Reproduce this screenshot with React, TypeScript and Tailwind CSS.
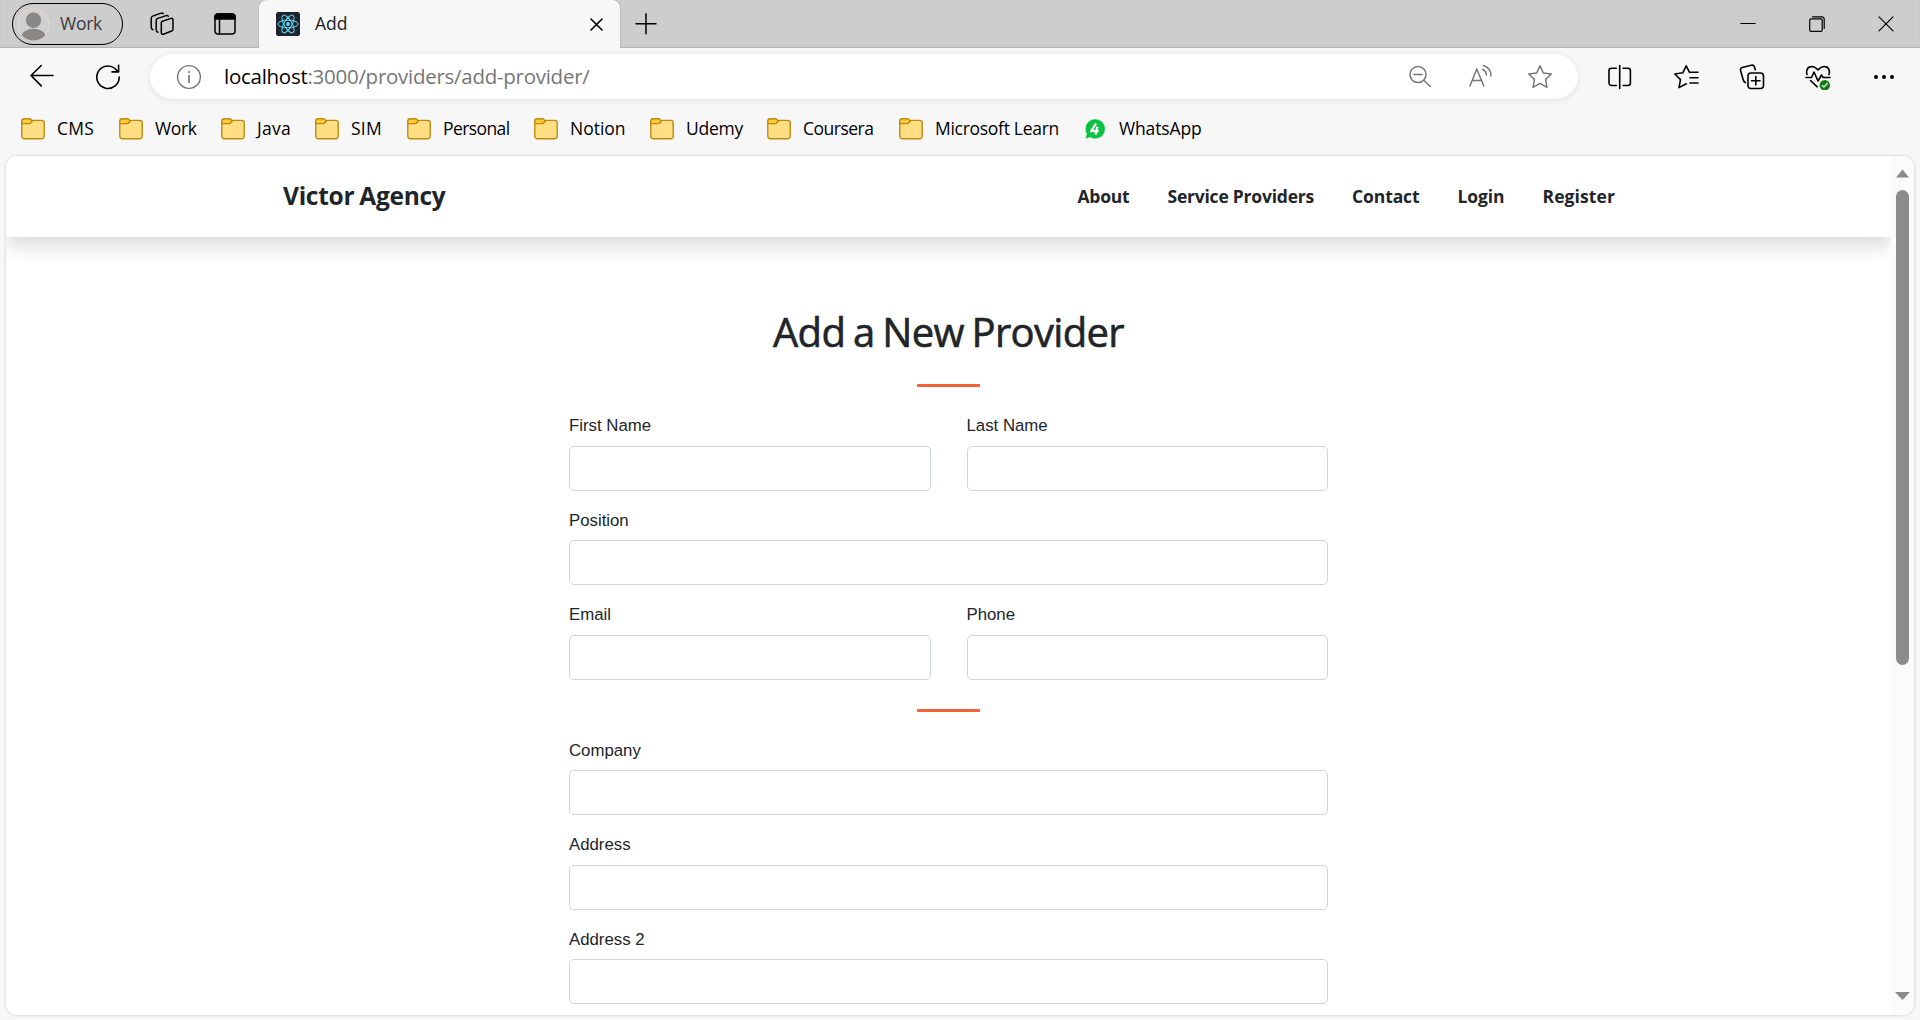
import { useLayoutEffect, useRef, type ReactNode } from "react";

/** Single-line text whose tracking is adjusted so that it fills `width` pixels. */
function FitText({ width, className = "", children }: { width: number; className?: string; children: ReactNode }) {
  const ref = useRef<HTMLSpanElement>(null);
  useLayoutEffect(() => {
    const el = ref.current;
    if (!el) return;
    el.style.letterSpacing = "0px";
    const natural = el.getBoundingClientRect().width;
    const count = (el.textContent ?? "").length;
    el.style.letterSpacing = `${(width - natural) / count}px`;
  }, [width]);
  return (
    <span ref={ref} className={`inline-block shrink-0 whitespace-nowrap ${className}`}>
      {children}
    </span>
  );
}

const line = { fill: "none", stroke: "currentColor", strokeLinecap: "round", strokeLinejoin: "round" } as const;

function WorkspacesIcon() {
  return (
    <svg width="26" height="26" viewBox="0 0 26 26" {...line} strokeWidth="1.5">
      <path d="M13.4 10.2 22.2 7.4a1.4 1.4 0 0 1 1.8 1.3v9.6a1.8 1.8 0 0 1-1.3 1.7l-8.3 3.2a1.5 1.5 0 0 1-2.1-1.4V11.8a1.7 1.7 0 0 1 1.1-1.6Z" />
      <path d="M8.9 21.3C7.8 20.9 7.2 20.1 7.2 18.8V9.6c0-1.1.5-1.8 1.5-2.2l8.5-2.8c1-.3 1.7 0 2 .7" />
      <path d="M3.9 18.7C2.8 18.2 2.2 17.4 2.2 16.2V7.4c0-1.2.5-1.9 1.5-2.3L12 2.1c1-.4 1.8-.1 2.2.6" />
    </svg>
  );
}

function TabActionsIcon() {
  return (
    <svg width="22" height="22" viewBox="0 0 22 22" {...line} strokeWidth="1.5">
      <rect x="1" y="1" width="20" height="20" rx="3" />
      <path d="M1 6V3.5A2.5 2.5 0 0 1 3.5 1h15A2.5 2.5 0 0 1 21 3.5V6Z" fill="currentColor" />
      <path d="M5.5 6v15" />
    </svg>
  );
}

function ReactLogo() {
  return (
    <svg width="24" height="24" viewBox="0 0 24 24">
      <rect width="24" height="24" rx="2.5" fill="#20232a" />
      <g fill="none" stroke="#61dafb" strokeWidth="1">
        <ellipse cx="12" cy="12" rx="10" ry="3.9" />
        <ellipse cx="12" cy="12" rx="10" ry="3.9" transform="rotate(60 12 12)" />
        <ellipse cx="12" cy="12" rx="10" ry="3.9" transform="rotate(120 12 12)" />
      </g>
      <circle cx="12" cy="12" r="1.9" fill="#61dafb" />
    </svg>
  );
}

function FolderIcon() {
  return (
    <svg className="shrink-0" width="24" height="22" viewBox="0 0 24 22" stroke="#bd8b0c" strokeWidth="1.4" strokeLinejoin="round">
      <path d="M.8 4h9.4l1.6-1.6h9A2.4 2.4 0 0 1 23.2 4.8v13.4a2.6 2.6 0 0 1-2.6 2.6H3.4A2.6 2.6 0 0 1 .8 18.2Z" fill="#ffde84" />
      <path d="M.8 5.6V3.2A2.4 2.4 0 0 1 3.2.8h5.1c1 0 1.4.4 2 1.1l.8 1-1 1.5c-.6.9-1.1 1.2-2 1.2Z" fill="#fdcb37" />
    </svg>
  );
}

function WhatsAppIcon() {
  return (
    <svg className="shrink-0" width="24" height="24" viewBox="0 0 24 24">
      <path
        d="M12.3 1.9a10 10 0 1 1-5 18.7L2.2 22l1.3-5.2A10 10 0 0 1 12.3 1.9Z"
        fill="#0cc143"
        stroke="#ffffff"
        strokeWidth=".6"
      />
      <path d="M13 6.5 8.2 14.2h7.5M14.3 9.7l-1.7 7.9" fill="none" stroke="#fff" strokeWidth="2.3" strokeLinejoin="round" />
    </svg>
  );
}

const bookmarks = [
  { name: "CMS", box: "w-[98px]", width: 37 },
  { name: "Work", box: "w-[102px]", width: 41.5 },
  { name: "Java", box: "w-[94px]", width: 34 },
  { name: "SIM", box: "w-[92px]", width: 31 },
  { name: "Personal", box: "w-[127px]", width: 66.5 },
  { name: "Notion", box: "w-[116px]", width: 55.5 },
  { name: "Udemy", box: "w-[117px]", width: 57 },
  { name: "Coursera", box: "w-[132px]", width: 70.5 },
  { name: "Microsoft Learn", box: "w-[184px]", width: 124 },
];

const links = [
  { name: "About", width: 52 },
  { name: "Service Providers", width: 146.5 },
  { name: "Contact", width: 67.5 },
  { name: "Login", width: 47 },
  { name: "Register", width: 72.5 },
];

function TabStrip() {
  return (
    <div className="flex h-12 items-center bg-[#cdcdcd] shadow-[inset_0_-1px_1px_#b4b4b4]">
      <button className="ml-3 flex h-[42px] w-[111px] shrink-0 items-center rounded-full border-[1.5px] border-black pl-1">
        <svg width="33" height="33" viewBox="0 0 33 33" className="shrink-0">
          <defs>
            <clipPath id="avatar">
              <circle cx="16.5" cy="16.5" r="16" />
            </clipPath>
          </defs>
          <circle cx="16.5" cy="16.5" r="15.7" fill="#d2d0ce" stroke="#dedcda" />
          <g fill="#8a8886" clipPath="url(#avatar)">
            <circle cx="16.5" cy="12.3" r="7.7" />
            <ellipse cx="16.5" cy="28.5" rx="12" ry="7.7" />
          </g>
        </svg>
        <FitText width={42} className="-mt-0.5 ml-2.5 text-[17.5px] text-[#3b3b3b]">Work</FitText>
      </button>
      <div className="ml-[26px] flex w-[26px]"><WorkspacesIcon /></div>
      <div className="ml-[39px] flex w-[22px]"><TabActionsIcon /></div>
      <div className="ml-[23px] flex h-full w-[361px] items-center rounded-t-lg bg-[#f7f7f7] pl-[17px] shadow-[0_0_2px_#999] [clip-path:inset(0_-3px_0_-3px)]">
        <ReactLogo />
        <FitText width={32.5} className="-mt-0.5 ml-[15px] text-[17.5px] text-[#1b1b1b]">Add</FitText>
        <svg className="ml-auto mr-[17px] mt-px" width="13" height="13" viewBox="0 0 13 13" {...line} strokeWidth="1.6">
          <path d="m1 1 11 11M12 1 1 12" />
        </svg>
      </div>
      <svg className="-mt-px ml-[15px]" width="22" height="22" viewBox="0 0 22 22" {...line} strokeWidth="1.5">
        <path d="M11 .8v20M1 10.800h20" />
      </svg>
      <div className="ml-auto mr-[26px] flex items-center gap-[53px]">
        <svg width="16" height="16" viewBox="0 0 16 16" {...line} strokeWidth="1.2"><path d="M.8 7.500h14.400" /></svg>
        <svg width="16" height="16" viewBox="0 0 16 16" {...line} strokeWidth="1.2">
          <rect x=".7" y="2.8" width="12.5" height="12.5" rx="1.3" />
          <path d="M3.500.8h9.200a2.500 2.500 0 0 1 2.500 2.500v9.200" />
        </svg>
        <svg width="16" height="16" viewBox="0 0 16 16" {...line} strokeWidth="1.2"><path d="m1 .8 14 14M15 .8l-14 14" /></svg>
      </div>
    </div>
  );
}

function AddressBar() {
  return (
    <div className="flex h-14 items-center pt-px">
      <svg className="-mt-px ml-[29px]" width="26" height="24" viewBox="0 0 26 24" {...line} strokeWidth="1.6">
        <path d="M24 11.500H2M12.300 1.500 2 11.500l10.300 10.400" />
      </svg>
      <svg className="ml-[40px]" width="26" height="26" viewBox="0 0 26 26" {...line} strokeWidth="1.6">
        <path d="M24.200 13A11.200 11.200 0 1 1 20 4.500l3 3.200M23.600 1.200v6.700h-6.600" />
      </svg>
      <div className="ml-[29px] flex h-[45px] w-[1428px] items-center rounded-full bg-white pl-[26px] pr-[25px] text-[#767676] shadow-[0_1px_6px_rgba(0,0,0,0.1)]">
        <svg width="26" height="26" viewBox="0 0 26 26" {...line} strokeWidth="1.4">
          <circle cx="13" cy="13" r="11.4" />
          <path d="M13 11.500v6.800" strokeWidth="1.7" />
          <circle cx="13" cy="8" r=".6" fill="currentColor" strokeWidth=".9" />
        </svg>
        <FitText width={365.5} className="-mt-px ml-[22px] text-[20.5px]">
          <span className="text-black">localhost</span>:3000/providers/add-provider/
        </FitText>
        <svg className="ml-auto" width="24" height="24" viewBox="0 0 24 24" {...line} strokeWidth="1.5">
          <circle cx="10" cy="9.5" r="8" />
          <path d="M6 9.500h8M15.800 15.300l6.500 6.200" />
        </svg>
        <svg className="ml-[36px]" width="26" height="26" viewBox="0 0 26 26" {...line} strokeWidth="1.5">
          <path d="M2 22 8.800 5 15.800 22M4.300 16.500h9.200M14.700 5.500c2.200 1 3.500 3 3.700 5.500M15.500 1.500c4.500 1.500 7.500 5.500 7.500 10.500" />
        </svg>
        <svg className="ml-[33px]" width="26" height="26" viewBox="0 0 26 26" {...line} strokeWidth="1.5">
          <path d="M13 1.800 16.300 9 24.300 10l-5.800 5.400 1.500 7.900-7-3.900-7 3.900 1.500-7.900L1.700 10l8-1Z" />
        </svg>
      </div>
      <div className="ml-[29px] flex items-center gap-[40px]">
        <svg width="26" height="26" viewBox="0 0 26 26" {...line} strokeWidth="1.6">
          <path d="M12.700 1.500v23M9.300 4.200H4.500a2.500 2.500 0 0 0-2.500 2.500V19a2.500 2.500 0 0 0 2.500 2.500h4.800M16.100 4.200h4.800a2.500 2.500 0 0 1 2.500 2.500V19a2.500 2.500 0 0 1-2.500 2.500h-4.800" />
        </svg>
        <svg width="26" height="26" viewBox="0 0 26 26" {...line} strokeWidth="1.6">
          <path d="M16.500 8.300 13.200 1.800 9.800 8.800 1.800 10l5.700 5.600L6 23.600l7.300-3.800M16.500 8.300H25M17 13.700h8M17 19h8" />
        </svg>
        <svg width="26" height="26" viewBox="0 0 26 26" {...line} strokeWidth="1.6">
          <rect x="9" y="9" width="15.5" height="15.5" rx="3" />
          <path d="M16.800 12.500v8.500M12.500 16.800H21M6.300 18.600C4.800 18 4.400 17 4.100 15.500L1.500 6.300C1.100 4.800 1.700 4 3.200 3.500l9-2.300c1.800-.4 2.700 0 3.200 1.500L16.200 5.800" />
        </svg>
        <svg width="26" height="26" viewBox="0 0 26 26" {...line} strokeWidth="1.6">
          <path d="M2 10.500C.8 7.500 2 3 6 2.600c3.200-.4 5 1.200 7 3.400 2-2.200 3.800-3.800 7-3.400 4 .4 5.200 4.900 4 7.900M1 13.500h5.500l2.500-5.500 4 9 3.500-6 1.700 2.500H25M5.500 16.500l6.700 6.300" />
          <circle cx="19.8" cy="21.2" r="5.2" fill="#107c10" stroke="none" />
          <path d="m17.300 21.500 1.600 1.600 3.300-3.600" stroke="#fff" strokeWidth="1.3" />
        </svg>
        <svg width="26" height="26" viewBox="0 0 26 26" fill="currentColor">
          <circle cx="5" cy="13" r="2" /><circle cx="13" cy="13" r="2" /><circle cx="21" cy="13" r="2" />
        </svg>
      </div>
    </div>
  );
}

function BookmarksBar() {
  return (
    <div className="flex h-[52px] items-center pb-[2px] pl-[21px] text-[17.5px] text-black">
      {bookmarks.map((b) => (
        <div key={b.name} className={`flex shrink-0 items-center gap-3 ${b.box}`}>
          <FolderIcon />
          <FitText width={b.width} className="-mt-px">{b.name}</FitText>
        </div>
      ))}
      <div className="flex items-center gap-3">
        <WhatsAppIcon />
        <FitText width={82.5} className="-mt-px">WhatsApp</FitText>
      </div>
    </div>
  );
}

function Field({ label }: { label: string }) {
  return (
    <label className="flex h-[94.5px] min-w-0 flex-1 flex-col">
      <span className="h-[25px] text-[16.8px] leading-[27px] text-[#212529]">{label}</span>
      <input className="mt-[8.5px] h-[45px] w-full rounded-[5px] border border-[#ced4da] bg-white" />
    </label>
  );
}

function Divider() {
  return <hr className="mx-auto h-[3px] w-[63px] border-0 bg-[#f4623a]" />;
}

function ProviderPage() {
  return (
    <div className="h-full w-[1885px] shrink-0 overflow-hidden bg-white text-[#212529]">
      <header className="flex h-[81px] items-center bg-white pl-[277px] pr-[276px] font-['Open_Sans',sans-serif] font-bold shadow-[0_9px_18px_rgba(0,0,0,0.15)]">
        <FitText width={162.5} className="text-[24.5px] [word-spacing:-1px]">Victor Agency</FitText>
        <nav className="ml-auto flex gap-[38px] text-[17.5px]">
          {links.map((l) => (
            <a key={l.name}><FitText width={l.width}>{l.name}</FitText></a>
          ))}
        </nav>
      </header>
      <main className="mx-auto w-[759px] pt-[67px]">
        <h1 className="flex h-[56px] items-center justify-center font-['Open_Sans',sans-serif] text-[40px] font-medium [-webkit-text-stroke:0.6px_#212529] [word-spacing:-2px]">
          <FitText width={351}>Add a New Provider</FitText>
        </h1>
        <div className="pt-[24px]"><Divider /></div>
        <form className="pt-[25px]">
          <div className="flex gap-9"><Field label="First Name" /><Field label="Last Name" /></div>
          <Field label="Position" />
          <div className="flex gap-9"><Field label="Email" /><Field label="Phone" /></div>
          <div className="pb-[24.5px] pt-[13.5px]"><Divider /></div>
          <Field label="Company" />
          <Field label="Address" />
          <Field label="Address 2" />
        </form>
      </main>
    </div>
  );
}

function Scrollbar() {
  return (
    <div className="flex flex-1 flex-col items-center bg-[#fbfbfb] pt-[13px]">
      <svg width="15" height="9" viewBox="0 0 15 9"><path d="M7.500.5 14 8.500H1Z" fill="#8b8b8b" /></svg>
      <div className="mt-3 h-[475px] w-[13px] rounded-full bg-[#8b8b8b]" />
      <svg className="mb-[15px] mt-auto" width="15" height="8" viewBox="0 0 15 8"><path d="M0 0h15L7.500 8Z" fill="#8b8b8b" /></svg>
    </div>
  );
}

export default function App() {
  return (
    <div className="flex h-[1020px] w-[1920px] flex-col overflow-hidden bg-[#f7f7f7] font-['Open_Sans','Noto_Sans',sans-serif] text-black">
      <TabStrip />
      <AddressBar />
      <BookmarksBar />
      <div className="ml-1.5 flex h-[859px] w-[1908px] overflow-hidden rounded-[11px] font-['Liberation_Sans',Arial,sans-serif] shadow-[0_0_3px_rgba(0,0,0,0.22)]">
        <ProviderPage />
        <Scrollbar />
      </div>
    </div>
  );
}
